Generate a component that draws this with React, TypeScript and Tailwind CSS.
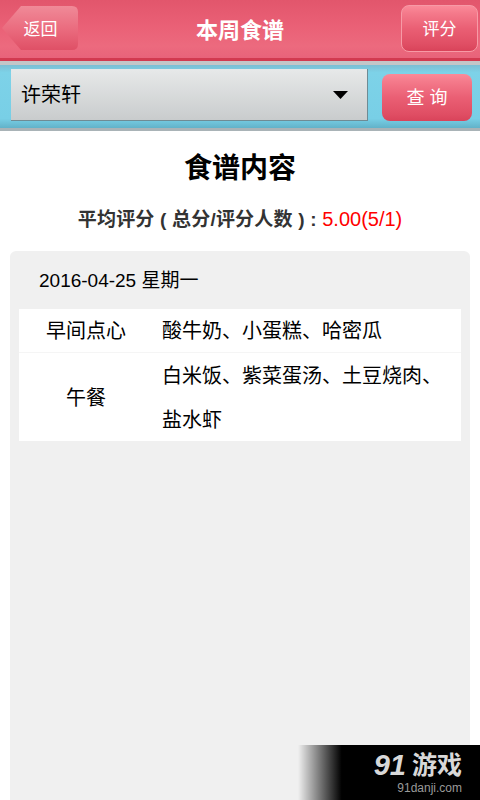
const cjk = "font-['Liberation_Sans','Noto_Sans_CJK_SC',sans-serif]";

const redBtn =
  "flex items-center justify-center rounded-lg text-white bg-[linear-gradient(#fb8a99_0%,#f47a8b_16%,#ea5f74_50%,#e04e64_85%,#d9435a_100%)]";

const BackButton = () => (
  <button className="relative w-[77px] h-[46px] ml-[2px] flex items-center justify-center pt-[2px]">
    <svg className="absolute inset-0" width="77" height="46" viewBox="0 0 77 46">
      <defs>
        <linearGradient id="backFill" x1="0" y1="0" x2="0" y2="1">
          <stop offset="0" stopColor="#f08a98" />
          <stop offset="0.55" stopColor="#ea6a7d" />
          <stop offset="1" stopColor="#df5066" />
        </linearGradient>
      </defs>
      <path d="M0 23 L19 1 H70 Q76 1 76 7 V39 Q76 45 70 45 H19 Z" fill="url(#backFill)" />
    </svg>
    <span className="relative text-white text-[17px] leading-none">返回</span>
  </button>
);

const MealRow = ({ name, food, last }: { name: string; food: string; last?: boolean }) => (
  <div className={`flex items-center pt-[1px] ${last ? "" : "border-b border-[#f5f5f5]"}`}>
    <div className="w-[134px] text-center shrink-0 text-[20px]">{name}</div>
    <div className={`flex-1 pl-[9px] pr-[10px] text-[20px] ${last ? "leading-[44px]" : "leading-[42px]"}`}>{food}</div>
  </div>
);

export default function App() {
  return (
    <div className={`relative w-[480px] h-[800px] overflow-hidden bg-white text-black ${cjk}`}>
      <header className="h-[61px] flex items-start justify-between pt-[5px] border-b-[3px] border-[#d23a50] bg-[linear-gradient(#e2566c_0%,#ea6076_45%,#ec6a7e_80%,#e8637a_100%)]">
        <BackButton />
        <h1 className="text-white font-bold text-[22px] leading-none mt-[15px]">本周食谱</h1>
        <button className={`${redBtn} w-[77px] h-[47px] mr-[2px] pt-[3px] text-[17px] border border-[#f79aa6]`}>评分</button>
      </header>

      <div className="h-[4px] bg-[#c3c6c8]" />

      <div className="h-[63px] flex items-start justify-between pt-[4px] pl-[11px] pr-[8px] bg-[linear-gradient(#7bbfd4_0%,#7dd2e8_12%,#78cfe6_85%,#62b2c9_100%)]">
        <div className="w-[357px] h-[52px] flex items-center justify-between pl-[10px] pr-[19px] bg-[linear-gradient(#e7e9e9,#c9cccd)] border-b border-r border-[#6f8b94]">
          <span className="text-[20px] text-black">许荣轩</span>
          <svg width="15" height="8" viewBox="0 0 15 8"><path d="M0 0H15L7.5 8Z" fill="#000" /></svg>
        </div>
        <button className={`${redBtn} w-[90px] h-[47px] mt-[5px] pt-[2px] text-[18px] tracking-[5px] pl-[5px]`}>查询</button>
      </div>

      <div className="h-[3px] bg-[#a9b3b7]" />

      <main>
        <h2 className="mt-[21px] text-center font-bold text-[28px] leading-[34px]">食谱内容</h2>
        <p className="mt-[16px] text-center text-[19px] leading-[34px] font-bold text-[#333] tracking-[0.2px]">
          平均评分 ( 总分/评分人数 ) : <span className="text-[#ff0000] font-normal text-[20px] tracking-normal">5.00(5/1)</span>
        </p>

        <section className="mt-[14px] mx-[10px] h-[560px] rounded-t-md bg-[#f0f0f0] px-[9px]">
          <div className="h-[58px] flex items-center pl-[20px] pt-[2px] text-[19px]">2016-04-25 星期一</div>
          <div className="bg-white h-[132px]">
            <MealRow name="早间点心" food="酸牛奶、小蛋糕、哈密瓜" />
            <MealRow name="午餐" food="白米饭、紫菜蛋汤、土豆烧肉、盐水虾" last />
          </div>
        </section>
      </main>

      <div className="absolute right-0 bottom-0 w-[182px] h-[55px] bg-[linear-gradient(90deg,rgba(0,0,0,0)_0%,#000_24%)] flex flex-col items-end pr-[18px] pt-[6px]">
        <div className="flex items-center text-[#d8d8d8] font-bold leading-none">
          <span className="italic text-[29px] mr-[6px]">91</span>
          <span className="text-[25px]">游戏</span>
        </div>
        <span className="mt-[2px] text-[12px] leading-none text-[#9a9a9a]">91danji.com</span>
      </div>
    </div>
  );
}
